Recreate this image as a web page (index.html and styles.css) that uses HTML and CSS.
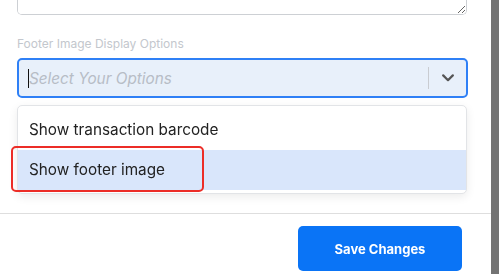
FILE: index.html
```html
<!DOCTYPE html>
<html lang="en">
<head>
    <meta charset="UTF-8">
    <meta name="viewport" content="width=device-width, initial-scale=1.0">
    <title>Receipt Settings</title>
    <link rel="stylesheet" href="styles.css">
</head>
<body>

    <div class="window">
        <div class="pane">
            <!-- Form fields -->
            <div class="form">
                <textarea class="notes"></textarea>

                <label class="field-label">Footer Image Display Options</label>

                <div class="select">
                    <div class="select-value">
                        <span class="caret"></span>
                        <span class="placeholder">Select Your Options</span>
                    </div>
                    <span class="separator"></span>
                    <span class="chevron">
                        <svg width="12" height="8" viewBox="0 0 12 8">
                            <path d="M1.2 1.4 L6 6.2 L10.8 1.4" fill="none" stroke="#555" stroke-width="2.2" stroke-linecap="round" stroke-linejoin="round"/>
                        </svg>
                    </span>
                </div>

                <div class="menu">
                    <div class="option">Show transaction barcode</div>
                    <div class="option active">
                        Show footer image
                        <span class="annotation"></span>
                    </div>
                </div>
            </div>

            <!-- Footer actions -->
            <div class="footer">
                <button class="save-btn">Save Changes</button>
            </div>
        </div>
        <div class="strip"></div>
    </div>

</body>
</html>
```

FILE: styles.css
```css
* {
    margin: 0;
    padding: 0;
    box-sizing: border-box;
}

body {
    font-family: Inter, "Noto Sans", Arial, sans-serif;
    background-color: #fff;
    color: #222;
    height: 274px;
    overflow: hidden;
}

.window {
    display: flex;
    height: 274px;
}

.pane {
    flex: 1;
    display: flex;
    flex-direction: column;
}

.strip {
    width: 8px;
    background-color: #737373;
}

.form {
    padding: 0 24px 0 17px;
}

.notes {
    display: block;
    width: 100%;
    height: 15px;
    border: 1px solid #cdd0d4;
    border-top: none;
    border-radius: 0 0 5px 5px;
    resize: vertical;
    outline: none;
}

.field-label {
    display: block;
    margin-top: 21px;
    height: 15px;
    line-height: 15px;
    font-size: 12px;
    color: #c3c7cd;
}

.select {
    display: flex;
    align-items: center;
    margin-top: 7px;
    height: 40px;
    margin-right: -1px;
    border: 2px solid #2f80f6;
    border-radius: 5px;
    background-color: #e8f0fa;
}

.select-value {
    flex: 1;
    display: flex;
    align-items: center;
    padding-left: 9px;
}

.caret {
    width: 1px;
    height: 19px;
    background-color: #111;
}

.placeholder {
    font-size: 15.3px;
    font-style: italic;
    color: #b7bdc6;
}

.separator {
    width: 1px;
    height: 22px;
    background-color: #c9ccd1;
}

.chevron {
    display: flex;
    align-items: center;
    justify-content: center;
    width: 37px;
    height: 100%;
}

.menu {
    margin-top: 7px;
    padding: 4px 0 3px;
    border: 1px solid #e2e4e7;
    border-radius: 5px;
    background-color: #fff;
    box-shadow: 0 3px 10px rgba(0, 0, 0, 0.08);
}

.option {
    position: relative;
    height: 40px;
    line-height: 40px;
    padding-left: 11px;
    font-size: 15.3px;
    color: #222;
}

.option.active {
    background-color: #d9e6fb;
}

/* red highlight drawn over the option */
.annotation {
    position: absolute;
    top: -4px;
    left: -7px;
    width: 193px;
    height: 46px;
    border: 2px solid #ec2d27;
    border-radius: 5px;
}

.footer {
    display: flex;
    justify-content: flex-end;
    margin-top: 19px;
    padding: 12px 29px 0 0;
    border-top: 1px solid #dedede;
}

.save-btn {
    width: 164px;
    height: 45px;
    border: none;
    border-radius: 5px;
    background-color: #0a74f6;
    color: #fff;
    font-family: inherit;
    font-size: 13px;
    font-weight: 700;
    cursor: pointer;
}
```
